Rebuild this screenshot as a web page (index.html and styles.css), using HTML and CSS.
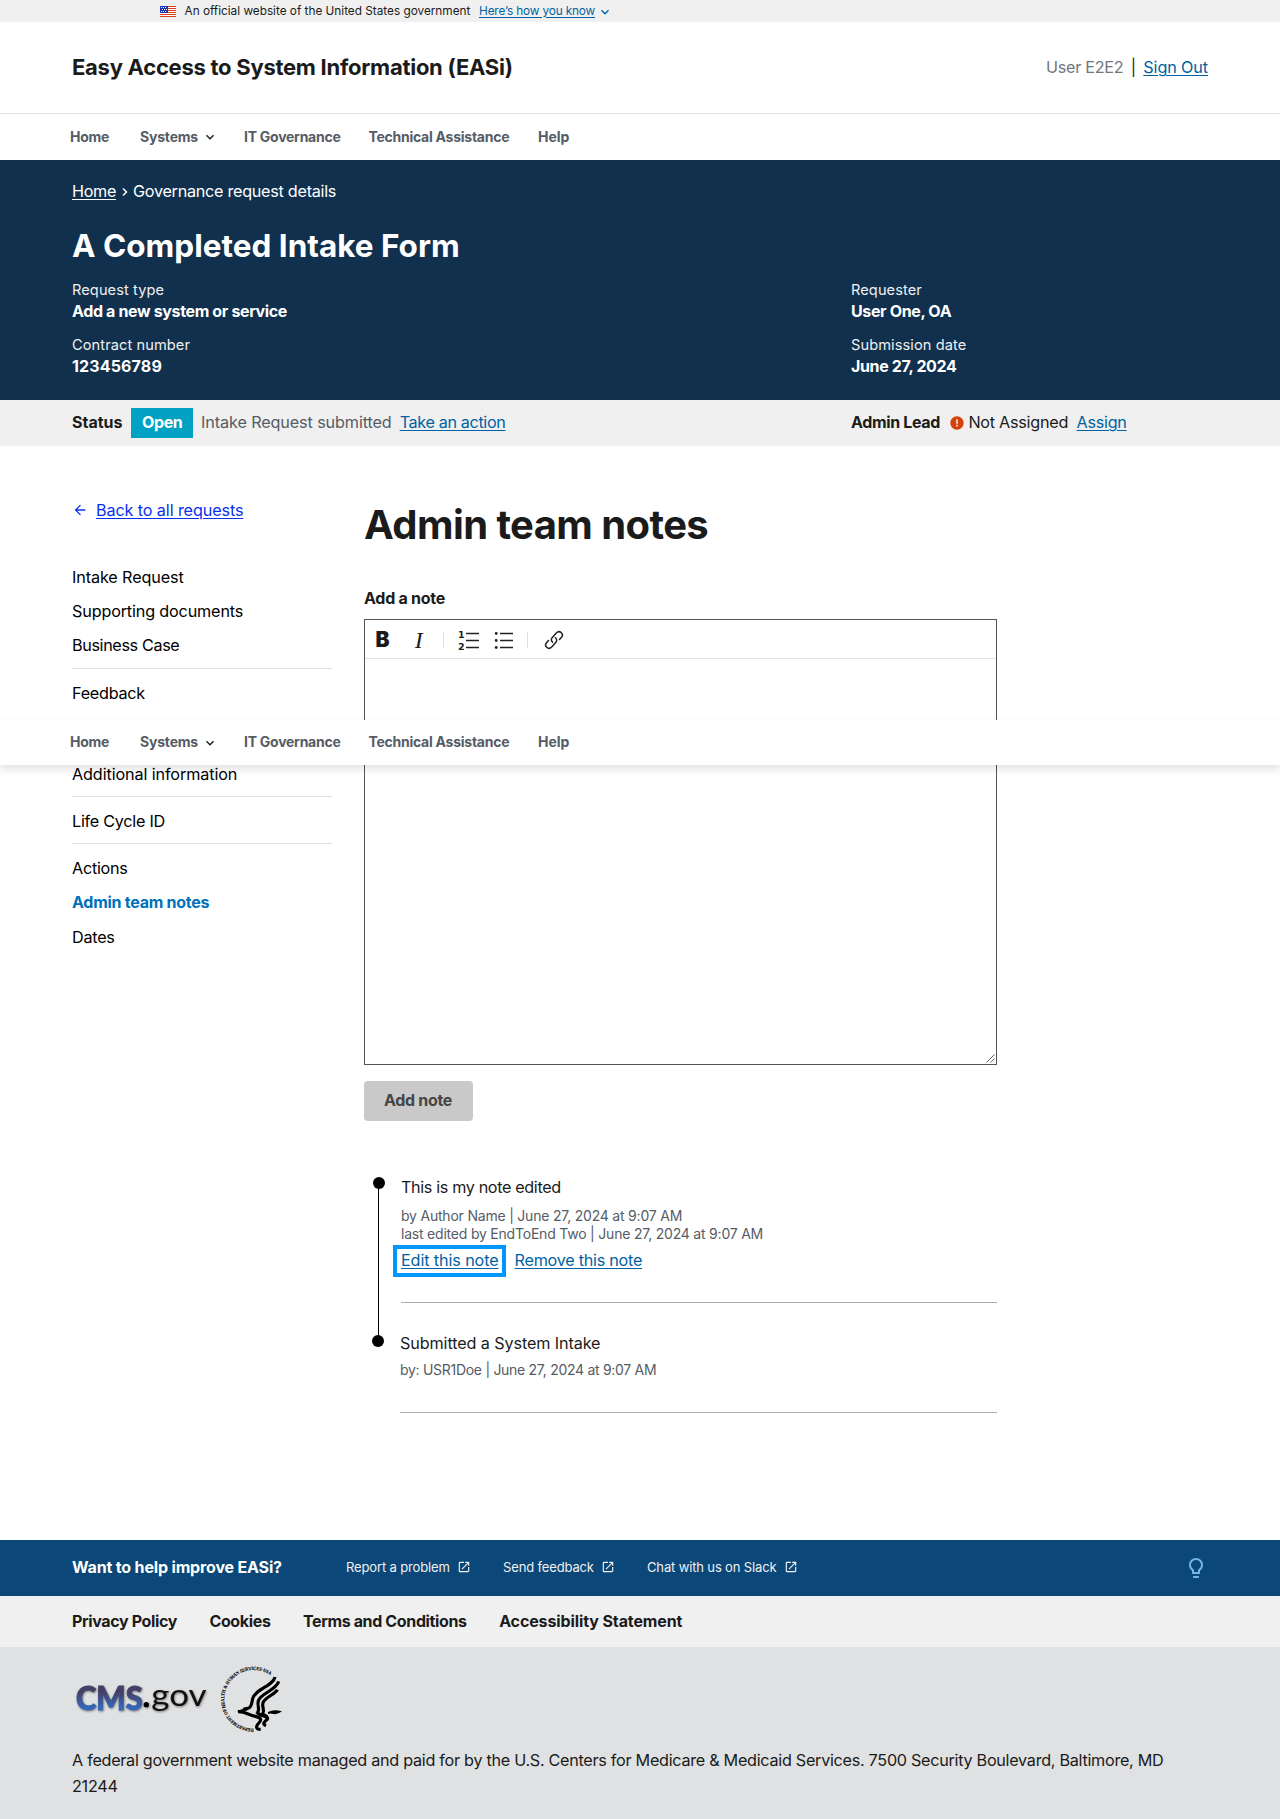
FILE: index.html
```html
<!DOCTYPE html>
<html lang="en">
<head>
<meta charset="utf-8">
<title>Admin team notes - EASi</title>
<link rel="stylesheet" href="styles.css">
</head>
<body>
<svg class="sprite" aria-hidden="true">
  <symbol id="expand" viewBox="0 0 24 24"><path d="M16.59 8.59 12 13.17 7.41 8.59 6 10l6 6 6-6z"/></symbol>
  <symbol id="launch" viewBox="0 0 24 24"><path d="M19 19H5V5h7V3H5a2 2 0 0 0-2 2v14a2 2 0 0 0 2 2h14c1.100 0 2-.9 2-2v-7h-2v7zM14 3v2h3.590l-9.830 9.830 1.410 1.410L19 6.410V10h2V3h-7z"/></symbol>
</svg>

<div class="banner">
  <svg class="flag" width="16" height="11" viewBox="0 0 16 11">
    <rect width="16" height="11" fill="#fff"/>
    <path d="M0 .5h16M0 2.500h16M0 4.500h16M0 6.500h16M0 8.500h16M0 10.500h16" stroke="#db3e1f"/>
    <rect width="8" height="7" fill="#1e33b1"/>
    <path d="M1 1.500h6M2 3.500h6M1 5.500h6" stroke="#fff" stroke-dasharray="1 1"/>
  </svg>
  <span class="banner-text">An official website of the United States government</span>
  <a class="link banner-link" href="#">Here’s how you know</a>
  <svg class="banner-chevron" width="16" height="16"><use href="#expand"/></svg>
</div>

<header class="header">
  <div class="site-title">Easy Access to System Information (EASi)</div>
  <div class="user"><span class="user-name">User E2E2</span><span class="bar">|</span><a class="link t1" href="#">Sign Out</a></div>
</header>

<nav class="nav">
  <a class="nav-home">Home</a>
  <a class="nav-systems">Systems<svg width="16" height="16"><use href="#expand"/></svg></a>
  <a class="nav-gov">IT Governance</a>
  <a class="nav-tech">Technical Assistance</a>
  <a class="nav-help">Help</a>
</nav>

<section class="summary">
  <div class="crumbs"><a href="#">Home</a><svg width="8" height="10" viewBox="0 0 8 10"><path d="M2 1.500 5.500 5 2 8.500" fill="none" stroke="#fff" stroke-width="1.500"/></svg><span class="crumb-current">Governance request details</span></div>
  <h1>A Completed Intake Form</h1>
  <div class="facts">
    <dl><dt>Request type</dt><dd class="t3">Add a new system or service</dd></dl>
    <dl><dt>Requester</dt><dd class="t3">User One, OA</dd></dl>
    <dl><dt>Contract number</dt><dd class="tp">123456789</dd></dl>
    <dl><dt>Submission date</dt><dd class="t3">June 27, 2024</dd></dl>
  </div>
</section>

<section class="status">
  <div class="status-left">
    <b class="t0">Status</b><span class="tag t3">Open</span><span class="muted t1">Intake Request submitted</span><a class="link t3" href="#">Take an action</a>
  </div>
  <div class="status-right">
    <b class="t3">Admin Lead</b>
    <svg width="16" height="16" viewBox="0 0 24 24"><path fill="#d54309" d="M12 2C6.480 2 2 6.480 2 12s4.480 10 10 10 10-4.480 10-10S17.520 2 12 2zm1.200 15.200h-2.400v-2.400h2.400v2.400zm0-4.200h-2.400V6.500h2.400V13z"/></svg>
    <span class="unassigned">Not Assigned</span><a class="link" href="#">Assign</a>
  </div>
</section>

<div class="content">
  <aside>
    <a class="back" href="#"><svg width="16" height="16" viewBox="0 0 24 24"><path fill="#0a2ff0" d="M20 11H7.830l5.590-5.590L12 4l-8 8 8 8 1.410-1.410L7.830 13H20v-2z"/></svg><span>Back to all requests</span></a>
    <ul class="side">
      <li class="t1">Intake Request</li>
      <li class="t2">Supporting documents</li>
      <li class="t3">Business Case</li>
      <li class="rule"></li>
      <li class="group-end">Feedback</li>
      <li class="rule"></li>
      <li class="t1">Additional information</li>
      <li class="rule"></li>
      <li>Life Cycle ID</li>
      <li class="rule"></li>
      <li>Actions</li>
      <li class="active">Admin team notes</li>
      <li>Dates</li>
    </ul>
  </aside>
  <main>
    <h2>Admin team notes</h2>
    <label class="label">Add a note</label>
    <div class="editor">
      <div class="toolbar">
        <span class="tool bold">B</span>
        <span class="tool italic">I</span>
        <span class="sep"></span>
        <svg class="tool-ol" width="22" height="22" viewBox="0 0 22 22"><path d="M8 4.500h13M8 11.500h13M8 18.500h13" stroke="#222" stroke-width="1.400"/><text x="0" y="9">1</text><text x="0" y="20.500">2</text></svg>
        <svg class="tool-ul" width="20" height="22" viewBox="0 0 20 22"><path d="M6 4.500h13M6 11.500h13M6 18.500h13" stroke="#222" stroke-width="1.400"/><g fill="#222"><circle cx="2.200" cy="4.500" r="1.400"/><circle cx="2.200" cy="11.500" r="1.400"/><circle cx="2.200" cy="18.500" r="1.400"/></g></svg>
        <span class="sep"></span>
        <svg class="tool-link" width="20" height="20" viewBox="0 0 20 20" fill="none" stroke="#222" stroke-width="1.500" stroke-linecap="round"><path d="M8.600 12.200C7 10.800 7 8.900 8.300 7.500L12.300 3c1.500-1.600 3.600-1.600 5-.3s1.300 3.300 0 4.800L15.500 9.500"/><path d="M11.400 7.800c1.600 1.400 1.600 3.300.3 4.700L7.700 17c-1.500 1.600-3.600 1.600-5 .3s-1.300-3.300 0-4.800L4.500 10.500"/></svg>
      </div>
      <svg class="grip" width="9" height="9" viewBox="0 0 9 9"><path d="M.5 8.500l8-8M4.500 8.500l4-4" stroke="#555" stroke-width=".9"/></svg>
    </div>
    <button class="add" disabled>Add note</button>
    <ol class="timeline">
      <li class="note">
        <span class="dot"></span>
        <div class="note-body">
          <p class="note-text t3">This is my note edited</p>
          <p class="meta">by Author Name | June 27, 2024 at 9:07 AM</p>
          <p class="meta">last edited by EndToEnd Two | June 27, 2024 at 9:07 AM</p>
          <div class="actions"><a class="link focus t1" href="#">Edit this note</a><a class="link" href="#">Remove this note</a></div>
        </div>
      </li>
      <li class="note last">
        <span class="dot"></span>
        <div class="note-body">
          <p class="note-text t1">Submitted a System Intake</p>
          <p class="meta t3">by: USR1Doe | June 27, 2024 at 9:07 AM</p>
        </div>
      </li>
    </ol>
  </main>
</div>

<section class="improve">
  <b class="t2">Want to help improve EASi?</b>
  <a class="i1">Report a problem<svg width="14" height="14"><use href="#launch"/></svg></a>
  <a class="i2">Send feedback<svg width="14" height="14"><use href="#launch"/></svg></a>
  <a class="i3">Chat with us on Slack<svg width="14" height="14"><use href="#launch"/></svg></a>
  <svg class="bulb" width="24" height="24" viewBox="0 0 24 24"><path fill="#73b3e7" d="M9 21c0 .55.450 1 1 1h4c.55 0 1-.45 1-1v-1H9v1zm3-19C8.140 2 5 5.140 5 9c0 2.380 1.190 4.470 3 5.740V17c0 .55.450 1 1 1h6c.55 0 1-.45 1-1v-2.260c1.810-1.270 3-3.360 3-5.740 0-3.860-3.140-7-7-7zm2.850 11.100l-.85.6V16h-4v-2.300l-.85-.6A4.997 4.997 0 0 1 7 9c0-2.760 2.240-5 5-5s5 2.240 5 5c0 1.630-.8 3.160-2.150 4.100z"/></svg>
</section>

<footer>
  <div class="policies"><a class="t3">Privacy Policy</a><a class="t3">Cookies</a><a class="t3">Terms and Conditions</a><a class="t1">Accessibility Statement</a></div>
  <div class="legal">
    <svg class="logos" width="228" height="80" viewBox="36 30 684 240">
      <defs>
        <linearGradient id="cms" x1="0" y1="0" x2="0" y2="1"><stop offset=".35" stop-color="#443f66"/><stop offset=".75" stop-color="#3566b8"/></linearGradient>
        <path id="ring" d="M581 236A88 88 0 1 1 634 78"/>
      </defs>
      <g class="wordmark">
        <text class="cms" x="48" y="179" textLength="200" lengthAdjust="spacingAndGlyphs">CMS</text>
        <circle cx="259" cy="164" r="8"/>
        <text class="gov" x="274" y="168" textLength="166" lengthAdjust="spacingAndGlyphs">gov</text>
      </g>
      <text class="seal"><textPath href="#ring" textLength="330" lengthAdjust="spacingAndGlyphs">DEPARTMENT OF HEALTH &amp; HUMAN SERVICES·USA</textPath></text>
      <g fill="none" stroke="#000" stroke-width="9.500" stroke-linejoin="round">
        <path d="M645 81C640 108 584 118 578 146C574 164 577 176 550 177"/>
        <path d="M656 94C650 120 602 130 595 152C590 168 602 178 592 188"/>
        <path d="M652 119C646 134 616 140 609 158C604 172 616 176 608 192L622 200"/>
        <path d="M534 185C556 184 566 196 586 199C608 204 604 212 594 222C586 232 590 238 602 238"/>
        <path d="M590 186C600 200 628 198 622 208C612 216 606 222 618 227"/>
      </g>
      <path d="M624 186Q640 176 666 184Q652 196 636 191Q630 189 624 192zM530 184L560 172L562 182z"/>
    </svg>
    <p>A federal government website managed and paid for by the U.S. Centers for Medicare &amp; Medicaid Services. 7500 Security Boulevard, Baltimore, MD 21244</p>
  </div>
</footer>

<nav class="nav sticky">
  <a class="nav-home">Home</a>
  <a class="nav-systems">Systems<svg width="16" height="16"><use href="#expand"/></svg></a>
  <a class="nav-gov">IT Governance</a>
  <a class="nav-tech">Technical Assistance</a>
  <a class="nav-help">Help</a>
</nav>
</body>
</html>
```
FILE: styles.css
```css
* { box-sizing: border-box; }
body {
  position: relative;
  margin: 0;
  background: #fff;
  color: #1b1b1b;
  font: 16.2px/25px Inter, "Open Sans", sans-serif;
  letter-spacing: -.016em;
}
h1, h2, p, dl, dd, ul, ol { margin: 0; padding: 0; }
ul, ol { list-style: none; }
svg { display: block; flex: none; }
b { font-size: 16px; font-weight: 700; }
.sprite { position: absolute; width: 0; height: 0; }
.link { color: #0062a3; text-decoration: underline; text-underline-offset: 2px; text-decoration-thickness: 1px; }
.muted { color: #565c65; }

/* tracking steps */
.tp { letter-spacing: .009em; }
.t0 { letter-spacing: 0; }
.t1 { letter-spacing: -.007em; }
.t2 { letter-spacing: -.01em; }
.t3 { letter-spacing: -.0225em; }

.banner {
  display: flex;
  align-items: center;
  height: 22px;
  padding-left: 160px;
  background: #f0f0f0;
  font-size: 11.8px;
}
.banner-text { width: 294.5px; margin-left: 8.5px; letter-spacing: -.001em; }
.banner-link { letter-spacing: -.012em; }
.banner-chevron { fill: #0062a3; margin: 2px 0 0 2px; }

.header {
  display: flex;
  align-items: center;
  justify-content: space-between;
  height: 92px;
  padding: 0 72px;
  border-bottom: 1px solid #dcdee0;
}
.site-title { font-size: 22px; font-weight: 700; letter-spacing: -.012em; }
.user { display: flex; }
.user-name { color: #71767a; letter-spacing: -.018em; }
.bar { width: 20px; text-align: center; }

.nav {
  display: flex;
  align-items: center;
  height: 46px;
  padding: 0 0 2px 70px;
  background: #fff;
  color: #565c65;
  font-size: 14px;
  font-weight: 700;
  letter-spacing: -.0185em;
}
.nav svg { fill: #1b1b1b; margin: 2px 0 0 4px; }
.nav-home { width: 70px; }
.nav-systems { display: flex; align-items: center; width: 104px; letter-spacing: -.014em; }
.nav-gov { width: 124.5px; }
.nav-tech { width: 169.5px; }
.nav-help { letter-spacing: 0; }
.sticky {
  position: absolute;
  top: 720px;
  left: 0;
  width: 100%;
  height: 45px;
  box-shadow: 0 4px 8px rgba(0, 0, 0, .12);
}

.summary { height: 240px; padding: 18px 72px 0; background: #10304e; color: #fff; }
.crumbs { display: flex; align-items: center; height: 26px; }
.crumbs a { color: #fff; text-underline-offset: 2px; letter-spacing: -.021em; }
.crumbs svg { margin: 1px 4px 0 5px; }
.crumb-current { letter-spacing: -.017em; }
.summary h1 { margin-top: 22px; font-size: 31.5px; line-height: 40px; font-weight: 700; letter-spacing: 0; }
.facts { display: grid; grid-template-columns: 779px 1fr; row-gap: 14px; margin-top: 14px; }
.facts dt { font-size: 14.6px; line-height: 21px; letter-spacing: .006em; color: #f0f0f0; }
.facts dd { font-size: 16px; line-height: 20px; font-weight: 700; }

.status { display: grid; grid-template-columns: 779px 1fr; height: 46px; padding: 0 72px; background: #f0f0f0; }
.status-left, .status-right { display: flex; align-items: center; padding-bottom: 1px; }
.tag { height: 30px; margin: 1px 8px 0 8.500px; padding: 0 10.600px 0 11px; background: #00a1c2; color: #fff; font-size: 16px; font-weight: 700; line-height: 28px; }
.status-left .link { margin-left: 8px; }
.status-right svg { margin: 1px 3.5px 0 9px; }
.unassigned { margin-right: 8.500px; }

.content { display: grid; grid-template-columns: 260px 633px; column-gap: 32px; height: 1094px; padding: 0 72px; }
aside { padding-top: 52px; }
.back { display: flex; align-items: center; gap: 8px; height: 24px; color: #0a2ff0; letter-spacing: -.007em; text-decoration: none; }
.back span { text-decoration: underline; text-underline-offset: 2px; text-decoration-thickness: 1px; }
.side { margin-top: 38px; color: #000; line-height: 34.2px; }
.rule { height: 1px; margin: 5.3px 0 6.700px; background: #dfe1e2; }
.group-end { padding-bottom: 34px; }
.active { color: #0071bc; font-size: 16px; font-weight: 700; }

main { padding-top: 54.5px; }
h2 { font-size: 40px; line-height: 48px; font-weight: 700; letter-spacing: -.0145em; }
.label { display: block; margin-top: 37.5px; font-size: 16px; font-weight: 700; line-height: 24px; }
.editor { position: relative; height: 446px; margin-top: 9px; border: 1px solid #555; }
.toolbar { display: flex; align-items: center; height: 39px; border-bottom: 1px solid #dfe1e2; color: #1b1b1b; }
.tool { width: 16px; line-height: 38px; text-align: center; }
.bold { margin: 2px 0 0 9.5px; font-size: 21px; font-weight: 900; }
.italic { margin: 2px 0 0 20px; font: italic 24px/38px "Liberation Serif", serif; }
.sep { width: 1px; height: 16px; margin: 2px 14px 0 16px; background: #dfe1e2; }
.tool-ol { margin-top: 1px; }
.tool-ol text { font: 700 9.5px "DejaVu Sans", sans-serif; fill: #222; letter-spacing: 0; }
.tool-ul { margin: 1px 0 0 14px; }
.tool-ul + .sep { margin: 2px 15.500px 0 13.500px; }
.tool-link { margin-top: 2px; }
.grip { position: absolute; right: 1px; bottom: 1px; }
.add {
  display: block;
  width: 109px;
  height: 40px;
  margin-top: 16px;
  padding: 0 1px 2px 0;
  border: 0;
  border-radius: 4px;
  background: #c9c9c9;
  color: #454545;
  font: 700 16px/24px Inter, sans-serif;
  letter-spacing: -.02em;
}

.timeline { margin-top: 54px; }
.note { position: relative; display: flex; height: 157px; padding-left: 9px; }
.note::before { content: ""; position: absolute; left: 14px; top: 8px; width: 1px; height: 158px; background: #000; }
.dot { width: 12px; height: 12px; margin-top: 2px; border-radius: 50%; background: #000; flex: none; z-index: 1; }
.note-body { flex: 1; height: 127.5px; margin-left: 16px; border-bottom: 1px solid #a9aeb1; }
.note-text { margin-bottom: 7px; }
.meta { color: #565c65; font-size: 14px; line-height: 18px; letter-spacing: -.015em; }
.meta.t3 { letter-spacing: -.0205em; }
.actions { display: flex; gap: 16.5px; margin-top: 5px; }
.focus { height: 24px; margin: 1px -4px 0; padding: 0 3.5px 0 4px; outline: 4px solid #0096ff; line-height: 23px; }
.note.last { height: auto; padding-left: 8px; }
.note.last::before { display: none; }
.note.last .dot { margin-top: 3px; }
.note.last .note-body { height: 81px; }
.note.last .note-text { margin: -1px 0 5px; }

.improve { display: flex; align-items: center; height: 56px; padding: 0 72px 2px; background: #0b4778; color: #fff; }
.improve b { width: 274px; }
.improve a { display: flex; align-items: center; gap: 7.5px; font-size: 13px; letter-spacing: -.011em; color: #f0f0f0; }
.improve a svg { fill: #f0f0f0; }
.i1 { width: 157px; }
.i2 { width: 144px; }
.bulb { margin: 2px 0 0 auto; }

.policies { display: flex; align-items: center; gap: 32.4px; height: 51px; padding-left: 72px; background: #f0f0f0; font-size: 16px; font-weight: 700; }
.legal { height: 172px; padding: 13px 72px 0; background: #dfe1e2; }
.legal p { margin-top: 7px; line-height: 26px; letter-spacing: -.0176em; }
.wordmark { filter: drop-shadow(2px 3px 3px rgba(0, 0, 0, .45)); }
.cms { font: 900 94px Lato, sans-serif; fill: url(#cms); stroke: url(#cms); stroke-width: 3px; letter-spacing: 0; }
.gov { font: 400 90px Lato, sans-serif; fill: #140f10; letter-spacing: 0; }
.seal { font: 700 14.5px "Liberation Serif", serif; letter-spacing: 0; stroke: #000; stroke-width: .4px; }
```
